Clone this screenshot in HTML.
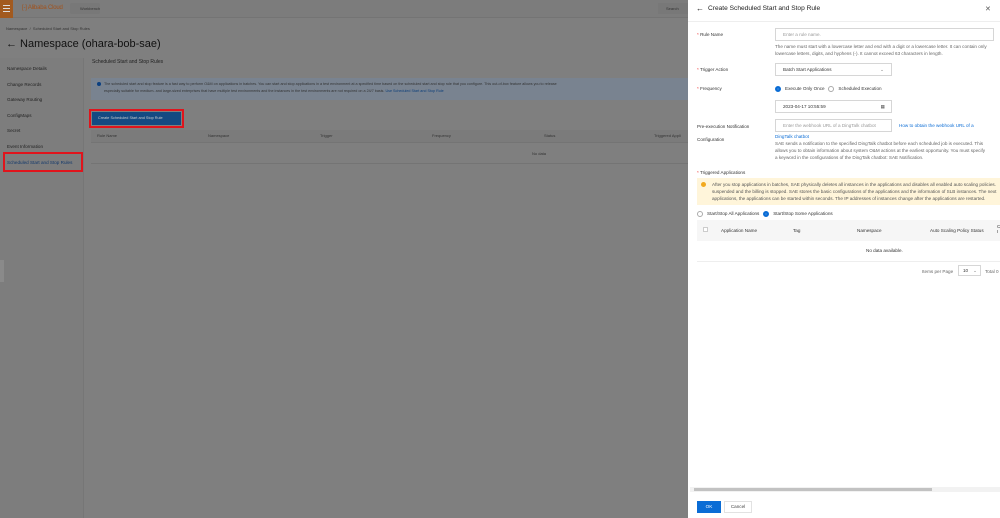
<!DOCTYPE html>
<html><head><meta charset="utf-8"><style>
*{box-sizing:border-box;margin:0;padding:0}
body{width:1000px;height:518px;overflow:hidden;position:relative;font-family:"Liberation Sans",sans-serif;background:#7f7f7f;color:#1c1c1c}
.a{position:absolute;white-space:nowrap}
.s{font-size:5px}
.p{font-size:4.6px;color:#666}
.lbl{font-size:4.6px;color:#333}
.in{position:absolute;border:1px solid #d6d6d6;background:#fff;font-size:4.6px;color:#999;padding:0 7px;display:flex;align-items:center}
.rd{display:inline-block;width:6px;height:6px;border-radius:50%;border:1px solid #aaa;vertical-align:middle;margin-right:4px}
.rd.on{border:2px solid #0a6cd5;background:#fff;box-shadow:inset 0 0 0 1px #0a6cd5}
</style></head><body>
<div class="a" style="left:0;top:0;width:688px;height:18px;background:#7c7c7c;border-bottom:1px solid #747474"></div>
<div class="a" style="left:0;top:0;width:13px;height:18px;background:#a25a1f"></div>
<div class="a" style="left:3px;top:5px;width:7px;height:1px;background:#ddd;box-shadow:0 3px #ddd,0 6px #ddd"></div>
<div class="a" style="left:22px;top:5px;font-size:6px;color:#a1521c;letter-spacing:-0.2px">[-] Alibaba Cloud</div>
<div class="a" style="left:70px;top:3px;width:30px;height:11px;background:#787878;border-radius:2px;font-size:4px;color:#333;padding:3px 0 0 10px">Workbench</div>
<div class="a" style="left:658px;top:3px;width:30px;height:11px;background:#787878;font-size:4px;color:#333;padding:3px 0 0 8px">Search</div>
<div class="a" style="left:6px;top:26px;font-size:4px;color:#333">Namespace &nbsp;/&nbsp; Scheduled Start and Stop Rules</div>
<div class="a" style="left:6px;top:38px;font-size:11px;color:#111">← Namespace (ohara-bob-sae)</div>
<div class="a" style="left:0;top:58px;width:84px;height:460px;background:#7d7d7d;border-right:1px solid #767676"></div>
<div class="a" style="left:7px;top:61px;font-size:4.6px;color:#222;line-height:15.6px;white-space:normal">Namespace Details<br>Change Records<br>Gateway Routing<br>ConfigMaps<br>Secret<br>Event Information<br><span style="color:#12386b">Scheduled Start and Stop Rules</span></div>
<div class="a" style="left:3px;top:152px;width:80px;height:20px;border:2px solid #e0141c"></div>
<div class="a" style="left:92px;top:59px;font-size:5px;color:#222">Scheduled Start and Stop Rules</div>
<div class="a" style="left:91px;top:78px;width:597px;height:22px;background:#798390"></div>
<div class="a" style="left:97px;top:82px;width:4px;height:4px;border-radius:50%;background:#0b3f80"></div>
<div class="a" style="left:104px;top:81px;font-size:3.7px;color:#333;line-height:7px">The scheduled start and stop feature is a fast way to perform O&amp;M on applications in batches. You can start and stop applications in a test environment at a specified time based on the scheduled start and stop rule that you configure. This out-of-box feature allows you to release<br>especially suitable for medium- and large-sized enterprises that have multiple test environments and the instances in the test environments are not required on a 24/7 basis. <span style="color:#0d3f7a">Use Scheduled Start and Stop Rule</span></div>
<div class="a" style="left:89px;top:109px;width:95px;height:19px;border:2px solid #e0141c"></div>
<div class="a" style="left:92px;top:112px;width:89px;height:13px;background:#144a82;font-size:3.8px;color:#ccc;padding:4px 0 0 6px">Create Scheduled Start and Stop Rule</div>
<div class="a" style="left:91px;top:130px;width:597px;height:13px;background:#7b7b7b;border-bottom:1px solid #747474"></div>
<div class="a" style="left:97px;top:133px;font-size:4px;color:#333">Rule Name</div>
<div class="a" style="left:208px;top:133px;font-size:4px;color:#333">Namespace</div>
<div class="a" style="left:320px;top:133px;font-size:4px;color:#333">Trigger</div>
<div class="a" style="left:432px;top:133px;font-size:4px;color:#333">Frequency</div>
<div class="a" style="left:544px;top:133px;font-size:4px;color:#333">Status</div>
<div class="a" style="left:654px;top:133px;font-size:4px;color:#333">Triggered Appli</div>
<div class="a" style="left:532px;top:151px;font-size:4px;color:#333">No data</div>
<div class="a" style="left:91px;top:163px;width:597px;height:1px;background:#747474"></div>
<div class="a" style="left:0;top:260px;width:4px;height:22px;background:#8a8a8a"></div>

<div class="a" style="left:688px;top:0;width:312px;height:518px;background:#fff"></div>
<div class="a" style="left:696px;top:4px;font-size:8px;color:#222">←</div>
<div class="a" style="left:708px;top:5px;font-size:6.6px;color:#222">Create Scheduled Start and Stop Rule</div>
<div class="a" style="left:985px;top:5px;font-size:7px;color:#555">✕</div>
<div class="a" style="left:688px;top:21px;width:312px;height:1px;background:#eee"></div>

<div class="a lbl" style="left:697px;top:32px"><span style="color:#e33">*</span> Rule Name</div>
<div class="in" style="left:775px;top:28px;width:219px;height:13px">Enter a rule name.</div>
<div class="a p" style="left:775px;top:44px;line-height:6.8px">The name must start with a lowercase letter and end with a digit or a lowercase letter. It can contain only<br>lowercase letters, digits, and hyphens (-). It cannot exceed 63 characters in length.</div>

<div class="a lbl" style="left:697px;top:67px"><span style="color:#e33">*</span> Trigger Action</div>
<div class="in" style="left:775px;top:63px;width:117px;height:13px;color:#333">Batch Start Applications<span style="position:absolute;right:7px;color:#777">⌄</span></div>

<div class="a lbl" style="left:697px;top:86px"><span style="color:#e33">*</span> Frequency</div>
<div class="a lbl" style="left:775px;top:86px"><span class="rd on"></span>Execute Only Once &nbsp;&nbsp;<span class="rd"></span>Scheduled Execution</div>
<div class="in" style="left:775px;top:100px;width:117px;height:13px;color:#333">2023-04-17 10:55:59<span style="position:absolute;right:6px;color:#555">▦</span></div>

<div class="a lbl" style="left:697px;top:124px">Pre-execution Notification</div>
<div class="a lbl" style="left:697px;top:137px">Configuration</div>
<div class="in" style="left:775px;top:119px;width:117px;height:13px">Enter the webhook URL of a DingTalk chatbot</div>
<div class="a" style="left:899px;top:123px;font-size:4.6px;color:#0a6cd5">How to obtain the webhook URL of a</div>
<div class="a" style="left:775px;top:134px;font-size:4.6px;color:#0a6cd5">DingTalk chatbot</div>
<div class="a p" style="left:775px;top:141px;line-height:6.8px">SAE sends a notification to the specified DingTalk chatbot before each scheduled job is executed. This<br>allows you to obtain information about system O&amp;M actions at the earliest opportunity. You must specify<br>a keyword in the configurations of the DingTalk chatbot: SAE Notification.</div>

<div class="a lbl" style="left:697px;top:170px"><span style="color:#e33">*</span> Triggered Applications</div>
<div class="a" style="left:697px;top:178px;width:303px;height:27px;background:#fff5da"></div>
<div class="a" style="left:701px;top:182px;width:5px;height:5px;border-radius:50%;background:#f2a91d"></div>
<div class="a p" style="left:712px;top:181px;line-height:7.2px;color:#555">After you stop applications in batches, SAE physically deletes all instances in the applications and disables all enabled auto scaling policies.<br>suspended and the billing is stopped. SAE stores the basic configurations of the applications and the information of SLB instances. The next<br>applications, the applications can be started within seconds. The IP addresses of instances change after the applications are restarted.</div>
<div class="a lbl" style="left:697px;top:211px"><span class="rd"></span>Start/Stop All Applications &nbsp;&nbsp;<span class="rd on"></span>Start/Stop Some Applications</div>
<div class="a" style="left:697px;top:220px;width:303px;height:21px;background:#f6f6f6"></div>
<div class="a" style="left:703px;top:227px;width:5px;height:5px;border:1px solid #ccc;background:#fff"></div>
<div class="a lbl" style="left:721px;top:228px">Application Name</div>
<div class="a lbl" style="left:793px;top:228px">Tag</div>
<div class="a lbl" style="left:857px;top:228px">Namespace</div>
<div class="a lbl" style="left:930px;top:228px">Auto Scaling Policy Status</div>
<div class="a lbl" style="left:997px;top:224px">C<br>I</div>
<div class="a lbl" style="left:866px;top:248px">No data available.</div>
<div class="a" style="left:697px;top:261px;width:303px;height:1px;background:#eee"></div>
<div class="a p" style="left:922px;top:269px">Items per Page</div>
<div class="in" style="left:958px;top:265px;width:23px;height:11px;color:#333;padding:0 4px">10<span style="position:absolute;right:3px;color:#777">⌄</span></div>
<div class="a p" style="left:985px;top:269px">Total 0</div>

<div class="a" style="left:690px;top:487px;width:310px;height:5px;background:#f2f2f2"></div>
<div class="a" style="left:694px;top:488px;width:238px;height:3px;background:#c2c2c2"></div>
<div class="a" style="left:697px;top:501px;width:24px;height:12px;background:#0a6cd5;color:#fff;font-size:4.6px;text-align:center;line-height:12px">OK</div>
<div class="a" style="left:724px;top:501px;width:28px;height:12px;border:1px solid #e2e2e2;color:#444;font-size:4.6px;text-align:center;line-height:10px">Cancel</div>
</body></html>
